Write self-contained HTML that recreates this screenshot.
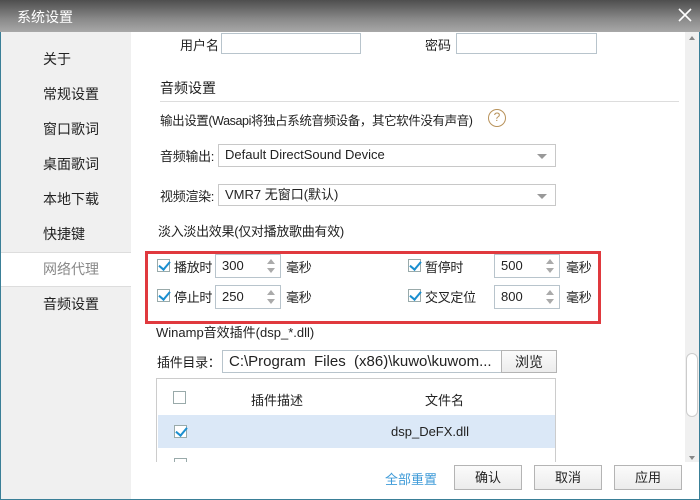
<!DOCTYPE html>
<html><head><meta charset="utf-8"><style>
*{margin:0;padding:0;box-sizing:border-box}
body{width:700px;height:500px;overflow:hidden;font-family:"Liberation Sans","Noto Sans CJK SC",sans-serif;font-size:13px;color:#222;background:#fff;position:relative}
.a{position:absolute;white-space:nowrap}
.win{position:absolute;left:0;top:0;width:700px;height:500px;border:1px solid #3a7f97}
.title{position:absolute;left:0;top:0;width:700px;height:32px;background:linear-gradient(#4e4e4e,#8a8a8a 60%,#a8a8a8)}
.side{position:absolute;left:1px;top:32px;width:130px;height:467px;background:#f0f0f0}
.si{position:absolute;left:43px;font-size:14px;line-height:20px;color:#222}
.inp{position:absolute;border:1px solid #b8c4cc;background:#fff}
.sel{position:absolute;border:1px solid #c8c8c8;background:#fff;padding-left:6px;line-height:20px}
.sel:after{content:"";position:absolute;right:8px;top:9px;border-left:5px solid transparent;border-right:5px solid transparent;border-top:5px solid #999}
.cb{position:absolute;width:13px;height:13px;border:1px solid #9aa;background:#fff}
.ck:after{content:"";position:absolute;left:3px;top:-1px;width:5px;height:9px;border:solid #1b8fd0;border-width:0 2px 2px 0;transform:rotate(40deg)}
.spin{position:absolute;border:1px solid #b8c4cc;background:#fff;padding-left:6px;line-height:22px;height:24px;width:66px}
.spin:before{content:"";position:absolute;right:5px;top:4px;border-left:4px solid transparent;border-right:4px solid transparent;border-bottom:5px solid #aaa}
.spin:after{content:"";position:absolute;right:5px;bottom:4px;border-left:4px solid transparent;border-right:4px solid transparent;border-top:5px solid #aaa}
.btn{position:absolute;border:1px solid #b4b4b4;background:linear-gradient(#fbfbfb,#ececec);text-align:center;line-height:23px;font-size:13px}
.t{letter-spacing:-0.3px}
</style></head><body>
<div class="win"></div>
<div class="title"></div>
<div class="a" style="left:17px;top:7px;color:#fff;font-size:14px">系统设置</div>
<svg class="a" style="left:677px;top:7px" width="16" height="16"><path d="M2 2L14 14M14 2L2 14" stroke="#fff" stroke-width="1.6"/></svg>
<div class="side"></div>
<div class="si" style="top:49px">关于</div>
<div class="si" style="top:84px">常规设置</div>
<div class="si" style="top:119px">窗口歌词</div>
<div class="si" style="top:154px">桌面歌词</div>
<div class="si" style="top:189px">本地下载</div>
<div class="si" style="top:224px">快捷键</div>
<div class="a" style="left:1px;top:252px;width:130px;height:35px;background:#fff;border-top:1px solid #ddd;border-bottom:1px solid #ddd"></div>
<div class="si" style="top:259px;color:#888">网络代理</div>
<div class="si" style="top:294px">音频设置</div>

<div class="a" style="left:180px;top:35px">用户名</div>
<div class="inp" style="left:221px;top:33px;width:140px;height:21px"></div>
<div class="a" style="left:425px;top:35px">密码</div>
<div class="inp" style="left:456px;top:33px;width:141px;height:21px"></div>

<div class="a" style="left:160px;top:78px;font-size:14px">音频设置</div>
<div class="a" style="left:160px;top:101px;width:519px;height:1px;background:#ddd"></div>
<div class="a" style="left:160px;top:110px;font-size:12.5px;letter-spacing:-0.4px">输出设置(Wasapi将独占系统音频设备，其它软件没有声音)</div>
<div class="a" style="left:488px;top:109px;width:18px;height:18px;border:1.5px solid #b8925a;border-radius:50%;color:#b8925a;font-size:12px;text-align:center;line-height:15px">?</div>

<div class="a t" style="left:160px;top:146px">音频输出:</div>
<div class="sel" style="left:218px;top:144px;width:338px;height:23px">Default DirectSound Device</div>
<div class="a t" style="left:160px;top:186px">视频渲染:</div>
<div class="sel" style="left:218px;top:184px;width:338px;height:22px">VMR7 无窗口(默认)</div>

<div class="a t" style="left:158px;top:221px">淡入淡出效果(仅对播放歌曲有效)</div>
<div class="a" style="left:145px;top:251px;width:456px;height:73px;border:3px solid #e0393e"></div>

<div class="cb ck" style="left:157px;top:259px"></div>
<div class="a t" style="left:174px;top:257px">播放时</div>
<div class="spin" style="left:215px;top:254px">300</div>
<div class="a t" style="left:286px;top:257px">毫秒</div>
<div class="cb ck" style="left:408px;top:259px"></div>
<div class="a t" style="left:425px;top:257px">暂停时</div>
<div class="spin" style="left:494px;top:254px">500</div>
<div class="a t" style="left:566px;top:257px">毫秒</div>

<div class="cb ck" style="left:157px;top:289px"></div>
<div class="a t" style="left:174px;top:287px">停止时</div>
<div class="spin" style="left:215px;top:285px">250</div>
<div class="a t" style="left:286px;top:287px">毫秒</div>
<div class="cb ck" style="left:408px;top:289px"></div>
<div class="a t" style="left:425px;top:287px">交叉定位</div>
<div class="spin" style="left:494px;top:285px">800</div>
<div class="a t" style="left:566px;top:287px">毫秒</div>

<div class="a" style="left:156px;top:322px">Winamp音效插件(dsp_*.dll)</div>
<div class="a t" style="left:157px;top:352px">插件目录：</div>
<div class="inp" style="left:222px;top:350px;width:280px;height:23px;padding-left:6px;font-size:15px;line-height:21px;overflow:hidden">C:\Program&nbsp; Files&nbsp; (x86)\kuwo\kuwom...</div>
<div class="btn" style="left:501px;top:350px;width:56px;height:23px;font-size:14px">浏览</div>

<div class="a" style="left:156px;top:378px;width:400px;height:84px;border:1px solid #ccc;border-bottom:none;overflow:hidden;background:#fff">
 <div class="cb" style="left:16px;top:12px"></div>
 <div class="a" style="left:94px;top:11px">插件描述</div>
 <div class="a" style="left:268px;top:11px">文件名</div>
 <div class="a" style="left:1px;top:36px;width:397px;height:33px;background:#dbe8f7"></div>
 <div class="cb ck" style="left:17px;top:46px"></div>
 <div class="a" style="left:234px;top:45px">dsp_DeFX.dll</div>
 <div class="cb" style="left:17px;top:79px"></div>
</div>

<div class="a" style="left:385px;top:469px;color:#3d9ad8">全部重置</div>
<div class="btn" style="left:454px;top:465px;width:68px;height:25px">确认</div>
<div class="btn" style="left:534px;top:465px;width:68px;height:25px">取消</div>
<div class="btn" style="left:614px;top:465px;width:68px;height:25px">应用</div>

<div class="a" style="left:685px;top:32px;width:14px;height:430px;background:#f0f0f0"></div>
<div class="a" style="left:689px;top:36px;border-left:3px solid transparent;border-right:3px solid transparent;border-bottom:4px solid #888"></div>
<div class="a" style="left:689px;top:456px;border-left:3px solid transparent;border-right:3px solid transparent;border-top:4px solid #888"></div>
<div class="a" style="left:686px;top:353px;width:12px;height:64px;background:#fff;border:1px solid #ccc;border-radius:6px"></div>
</body></html>
